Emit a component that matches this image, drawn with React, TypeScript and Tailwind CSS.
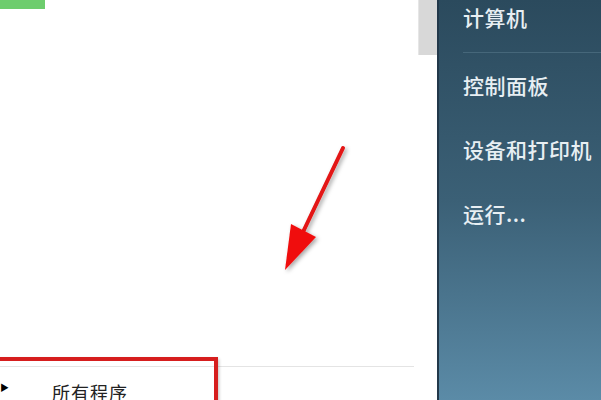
import React from 'react';

const cjk = { fontFamily: '"Noto Sans CJK SC", "Noto Sans", sans-serif' };

const links = ['控制面板', '设备和打印机', '运行...'];

export default function App() {
    return (
        <div className="relative w-[601px] h-[400px] overflow-hidden flex bg-white" style={cjk}>
            {/* Left programs pane */}
            <div className="w-[437px] h-full flex">
                <div className="flex-1 flex flex-col">
                    <div className="w-[45px] h-[9px] bg-[#6dcd6d]"></div>
                    <div className="flex-1"></div>
                    <div className="h-px bg-[#e4e4e4] mr-[4px]"></div>
                    <div className="h-[33px] flex items-start pt-[16px]">
                        <span className="text-[9px] leading-none text-black ml-0 w-[52px]">▶</span>
                        <span className="text-[18px] leading-none text-[#222] tracking-[1px]">所有程序</span>
                    </div>
                </div>
                <div className="w-[19px] flex flex-col">
                    <div className="h-[55px] bg-[#d8d8d8] border-l border-[#e6e6e6]"></div>
                </div>
            </div>

            {/* Right links pane */}
            <div className="flex-1 h-full flex flex-col border-l-2 border-[#22384a] bg-gradient-to-b from-[#2b4a5d] via-[#3b6076] to-[#5b8ba7] text-[#e8eff3] font-medium">
                <div className="h-[52px] pl-[24px] pt-[4px] text-[21px] leading-[26px] tracking-[0.5px]">计算机</div>
                <div className="h-px bg-[#46677a] ml-[24px]"></div>
                {links.map((label) => (
                    <div key={label} className="h-[64px] pl-[24px] flex items-center text-[21px] leading-none tracking-[0.5px]">
                        {label}
                    </div>
                ))}
            </div>

            {/* Annotation: red highlight box */}
            <div className="absolute left-[-6px] top-[357px] w-[224px] h-[60px] border-[4px] border-[#d61e1e] shadow-[1px_2px_3px_rgba(0,0,0,0.25)]"></div>

            {/* Annotation: red arrow */}
            <svg className="absolute left-0 top-0" width="601" height="400" viewBox="0 0 601 400">
                <defs>
                    <filter id="arrowShadow" x="-20%" y="-20%" width="140%" height="140%">
                        <feDropShadow dx="2" dy="2" stdDeviation="2" floodColor="#000" floodOpacity="0.35" />
                    </filter>
                </defs>
                <g filter="url(#arrowShadow)">
                    <line x1="343" y1="148" x2="303" y2="232" stroke="#e31414" strokeWidth="4" strokeLinecap="round" />
                    <polygon points="285,270 291,224 316,237" fill="#f01010" />
                </g>
            </svg>
        </div>
    );
}
